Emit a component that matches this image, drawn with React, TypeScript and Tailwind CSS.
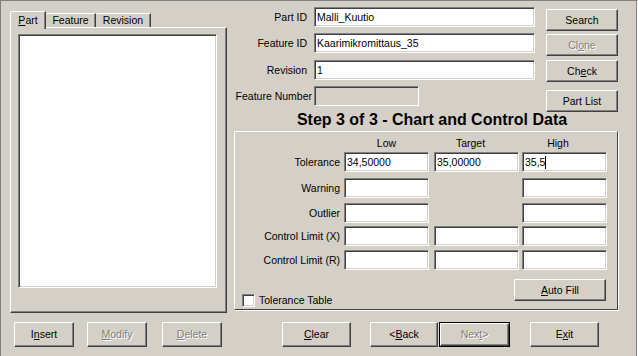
import type { ReactNode } from 'react';

const sunken =
  'border border-t-[#808080] border-l-[#808080] border-r-white border-b-white shadow-[inset_1px_1px_0_#404040,inset_-1px_-1px_0_#d4d0c8]';
const raised =
  'border border-t-white border-l-white border-r-[#404040] border-b-[#404040] shadow-[inset_-1px_-1px_0_#808080]';

function Btn({
  children,
  className = '',
  disabled,
}: {
  children: ReactNode;
  className?: string;
  disabled?: boolean;
}) {
  return (
    <div
      className={`${raised} flex items-center justify-center bg-[#d4d0c8] ${
        disabled ? 'text-[#808080] [text-shadow:1px_1px_0_#fff]' : 'text-black'
      } ${className}`}
    >
      {children}
    </div>
  );
}

function Key({ children }: { children: ReactNode }) {
  return <span className="underline underline-offset-[1px]">{children}</span>;
}

function Field({ value, className = '', caret, disabled }: { value?: string; className?: string; caret?: boolean; disabled?: boolean }) {
  return (
    <div className={`${sunken} h-[20px] flex items-center pl-[2px] ${disabled ? 'bg-[#d4d0c8]' : 'bg-white'} ${className}`}>
      <span>{value}</span>
      {caret && <span className="w-px h-[13px] bg-black" />}
    </div>
  );
}

function Label({ children, className = '' }: { children: ReactNode; className?: string }) {
  return <div className={`flex justify-end whitespace-nowrap ${className}`}>{children}</div>;
}

function Row({ label, low, target, high, noTarget, className = '' }: {
  label: string;
  low?: string;
  target?: string;
  high?: string;
  noTarget?: boolean;
  className?: string;
}) {
  return (
    <div className={`flex items-center ${className}`}>
      <Label className="w-[109px] pr-[4px]">{label}</Label>
      <Field value={low} className="w-[85px]" />
      {noTarget ? <div className="w-[85px] ml-[5px]" /> : <Field value={target} className="w-[85px] ml-[5px]" />}
      <Field value={high} className="w-[85px] ml-[3px]" caret={high === '35,5'} />
    </div>
  );
}

export default function App() {
  return (
    <div className="w-[638px] h-[356px] bg-[#d4d0c8] border-t border-l border-r border-t-[#808080] border-l-[#808080] border-r-white shadow-[inset_-1px_0_0_#808080] overflow-hidden text-[10.5px] leading-[13px] text-black font-['Liberation_Sans',Arial,sans-serif]">
      <div className="flex items-start">
        {/* left: tabs */}
        <div className="ml-[9px] mt-[10px] w-[217px] flex flex-col">
          <div className="flex items-end">
            <div className="relative z-10 -mb-[2px] h-[18px] w-[36px] bg-[#d4d0c8] border-t border-l border-r border-t-white border-l-white border-r-[#404040] rounded-tl-[2px] shadow-[inset_-1px_0_0_#808080] flex items-start justify-center pt-[2px]">
              <span><Key>P</Key>art</span>
            </div>
            <div className="h-[14px] w-[50px] border-t border-r border-t-white border-r-[#404040] rounded-tl-[2px] shadow-[inset_-1px_0_0_#808080] flex items-center justify-center">
              Feature
            </div>
            <div className="h-[14px] w-[55px] border-t border-r border-t-white border-r-[#404040] rounded-tl-[2px] shadow-[inset_-1px_0_0_#808080] flex items-center justify-center">
              Revision
            </div>
          </div>
          <div className={`${raised} h-[286px] flex flex-col`}>
            <div className={`${sunken} bg-white ml-[7px] mt-[6px] w-[199px] h-[254px]`} />
          </div>
        </div>

        {/* right */}
        <div className="ml-[7px] w-[384px] flex flex-col">
          <div className="flex items-start">
            <div className="w-[301px] flex flex-col">
              <div className="flex items-center mt-[6px]">
                <Label className="w-[80px] pr-[7px]">Part ID</Label>
                <Field value="Malli_Kuutio" className="w-[221px]" />
              </div>
              <div className="flex items-center mt-[6px]">
                <Label className="w-[80px] pr-[7px]">Feature ID</Label>
                <Field value="Kaarimikromittaus_35" className="w-[221px]" />
              </div>
              <div className="flex items-center mt-[7px]">
                <Label className="w-[80px] pr-[7px]">Revision</Label>
                <Field value="1" className="w-[221px]" />
              </div>
              <div className="flex items-center mt-[6px]">
                <Label className="w-[80px] pr-[2px]">Feature Number</Label>
                <Field className="w-[105px]" disabled />
              </div>
            </div>
            <div className="ml-[11px] w-[72px] flex flex-col">
              <Btn className="mt-[8px] h-[22px]">Search</Btn>
              <Btn className="mt-[3px] h-[22px]" disabled>
                <span>Cl<Key>o</Key>ne</span>
              </Btn>
              <Btn className="mt-[4px] h-[22px]">
                <span>Ch<Key>e</Key>ck</span>
              </Btn>
              <Btn className="mt-[8px] h-[22px]">Part List</Btn>
            </div>
          </div>

          <div className="mt-0 pl-[12px] text-center text-[16px] leading-[16px] font-bold">
            Step 3 of 3 - Chart and Control Data
          </div>

          <div className="mt-[3px] h-[179px] border border-t-white border-l-white border-r-[#404040] border-b-[#404040] shadow-[1px_1px_0_#fff] flex flex-col">
            <div className="flex mt-[5px]">
              <div className="w-[109px]" />
              <div className="w-[85px] text-center">Low</div>
              <div className="w-[85px] ml-[5px] text-center pr-[12px]">Target</div>
              <div className="w-[85px] ml-[3px] text-center pr-[13px]">High</div>
            </div>
            <Row className="mt-[2px]" label="Tolerance" low="34,50000" target="35,00000" high="35,5" />
            <Row className="mt-[6px]" label="Warning" noTarget />
            <Row className="mt-[5px]" label="Outlier" noTarget />
            <Row className="mt-[3px]" label="Control Limit (X)" />
            <Row className="mt-[4px]" label="Control Limit (R)" />
            <div className="flex items-start justify-between mt-[9px]">
              <div className="flex items-center ml-[7px] mt-[15px]">
                <div className={`${sunken} bg-white w-[13px] h-[13px]`} />
                <span className="ml-[4px]">Tolerance Table</span>
              </div>
              <Btn className="mr-[11px] w-[92px] h-[22px]">
                <span><Key>A</Key>uto Fill</span>
              </Btn>
            </div>
          </div>
        </div>
      </div>

      {/* bottom buttons */}
      <div className="flex items-start mt-[9px]">
        <Btn className="ml-[13px] w-[60px] h-[25px]">
          <span>I<Key>n</Key>sert</span>
        </Btn>
        <Btn className="ml-[13px] w-[60px] h-[25px]" disabled>
          <span><Key>M</Key>odify</span>
        </Btn>
        <Btn className="ml-[15px] w-[60px] h-[25px]" disabled>
          <span><Key>D</Key>elete</span>
        </Btn>
        <Btn className="ml-[60px] w-[69px] h-[25px]">
          <span><Key>C</Key>lear</span>
        </Btn>
        <Btn className="ml-[19px] w-[68px] h-[25px]">
          <span>&lt;<Key>B</Key>ack</span>
        </Btn>
        <div className="ml-[1px] w-[71px] h-[25px] border border-black flex">
          <Btn className="flex-1" disabled>
            <span>Nex<Key>t</Key>&gt;</span>
          </Btn>
        </div>
        <Btn className="ml-[20px] w-[69px] h-[25px]">
          <span>E<Key>x</Key>it</span>
        </Btn>
      </div>
    </div>
  );
}
